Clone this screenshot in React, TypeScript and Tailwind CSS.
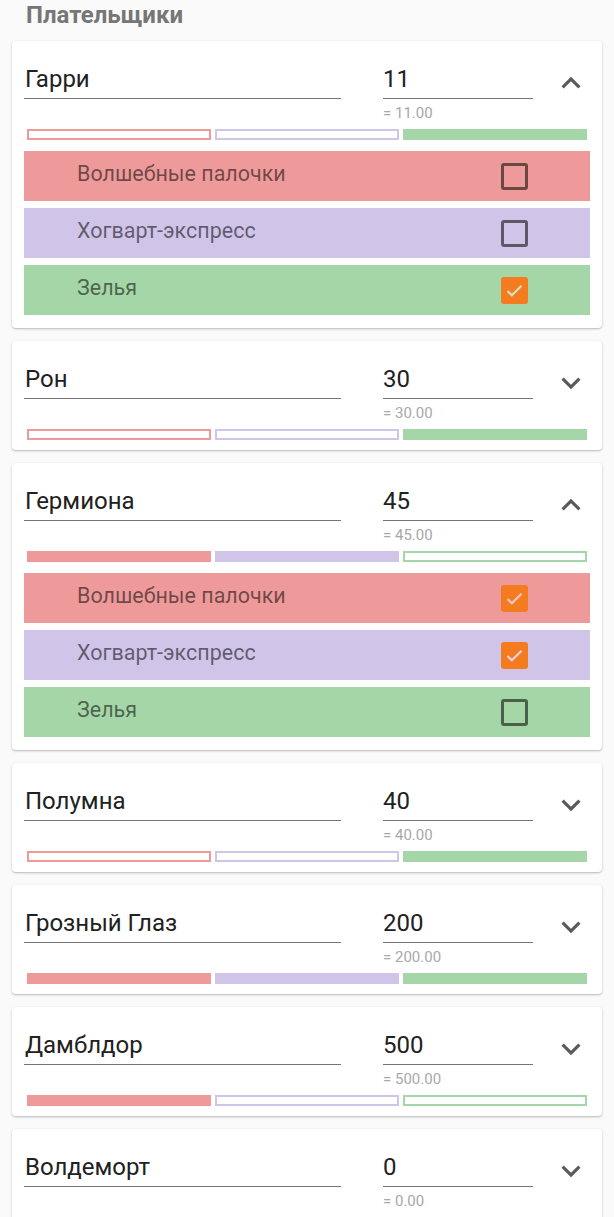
import React from 'react';

type Cat = { name: string; bg: string; border: string; check: string };

const cats: Cat[] = [
  { name: 'Волшебные палочки', bg: 'bg-[#ef9a9a]', border: 'border-[#ef9a9a]', check: '#f6c9c3' },
  { name: 'Хогварт-экспресс', bg: 'bg-[#d1c4e9]', border: 'border-[#d1c4e9]', check: '#ead2e3' },
  { name: 'Зелья', bg: 'bg-[#a5d6a7]', border: 'border-[#a5d6a7]', check: '#d4e6b9' },
];

type Payer = { name: string; amount: string; total: string; sel: boolean[]; open?: boolean };

const payers: Payer[] = [
  { name: 'Гарри', amount: '11', total: '= 11.00', sel: [false, false, true], open: true },
  { name: 'Рон', amount: '30', total: '= 30.00', sel: [false, false, true] },
  { name: 'Гермиона', amount: '45', total: '= 45.00', sel: [true, true, false], open: true },
  { name: 'Полумна', amount: '40', total: '= 40.00', sel: [false, false, true] },
  { name: 'Грозный Глаз', amount: '200', total: '= 200.00', sel: [true, true, true] },
  { name: 'Дамблдор', amount: '500', total: '= 500.00', sel: [true, false, false] },
  { name: 'Волдеморт', amount: '0', total: '= 0.00', sel: [false, false, false] },
];

function Chevron({ up }: { up?: boolean }) {
  return (
    <svg width="38" height="38" viewBox="0 0 24 24" fill="#5a5a5a">
      {up ? (
        <path d="M7.41 15.41L12 10.83l4.59 4.58L18 14l-6-6-6 6z" />
      ) : (
        <path d="M16.59 8.59L12 13.17 7.41 8.59 6 10l6 6 6-6z" />
      )}
    </svg>
  );
}

function Checkbox({ checked, color }: { checked: boolean; color: string }) {
  if (checked) {
    return (
      <div className="w-[27px] h-[27px] rounded-[3px] bg-[#f47b20] flex items-center justify-center">
        <svg width="21" height="21" viewBox="0 0 24 24" fill="none">
          <path d="M4 12.5l5 5L20 6.5" stroke={color} strokeWidth="2.4" />
        </svg>
      </div>
    );
  }
  return <div className="w-[27px] h-[27px] rounded-[3px] border-[3px] border-black/55" />;
}

function PayerCard({ p }: { p: Payer }) {
  return (
    <div className={`mx-[12px] bg-white rounded-[4px] shadow-[0_1px_3px_rgba(0,0,0,0.18),0_1px_1px_rgba(0,0,0,0.1)] px-[12px] pt-[25px] ${p.open ? 'pb-[13px]' : 'pb-[10px]'}`}>
      <div className="flex items-start">
        <div className="flex-1 border-b border-[#757575] pb-[6px] text-[24px] leading-[26px] text-[#212121] pl-[1px]">{p.name}</div>
        <div className="w-[150px] ml-[42px]">
          <div className="border-b border-[#757575] pb-[6px] text-[24px] leading-[26px] text-[#212121]">{p.amount}</div>
          <div className="mt-[6px] text-[15px] leading-[16px] text-[#a8a8a8]">{p.total}</div>
        </div>
        <div className="ml-[19px] w-[38px] -mt-[2px]">
          <Chevron up={p.open} />
        </div>
      </div>
      <div className="mt-[8px] mx-[3px] grid grid-cols-3 gap-[4px]">
        {cats.map((c, i) => (
          <div key={c.name} className={`h-[11px] ${p.sel[i] ? c.bg : `border-2 ${c.border} bg-white`}`} />
        ))}
      </div>
      {p.open && (
        <div className="mt-[11px] flex flex-col gap-[7px]">
          {cats.map((c, i) => (
            <div key={c.name} className={`h-[50px] ${c.bg} flex items-center justify-between pl-[53px] pr-[62px]`}>
              <span className="text-[21.5px] leading-[26px] -mt-[4px] text-black/55">{c.name}</span>
              <Checkbox checked={p.sel[i]} color={c.check} />
            </div>
          ))}
        </div>
      )}
    </div>
  );
}

export default function App() {
  return (
    <div className="min-h-screen bg-[#fafafa] font-['Roboto',sans-serif] pt-[2px]">
      <h2 className="pl-[26px] text-[24px] leading-[26px] font-bold text-[#767676] mb-[13px]">Плательщики</h2>
      <div className="flex flex-col gap-[13px] pb-6">
        {payers.map((p) => (
          <PayerCard key={p.name} p={p} />
        ))}
      </div>
    </div>
  );
}
